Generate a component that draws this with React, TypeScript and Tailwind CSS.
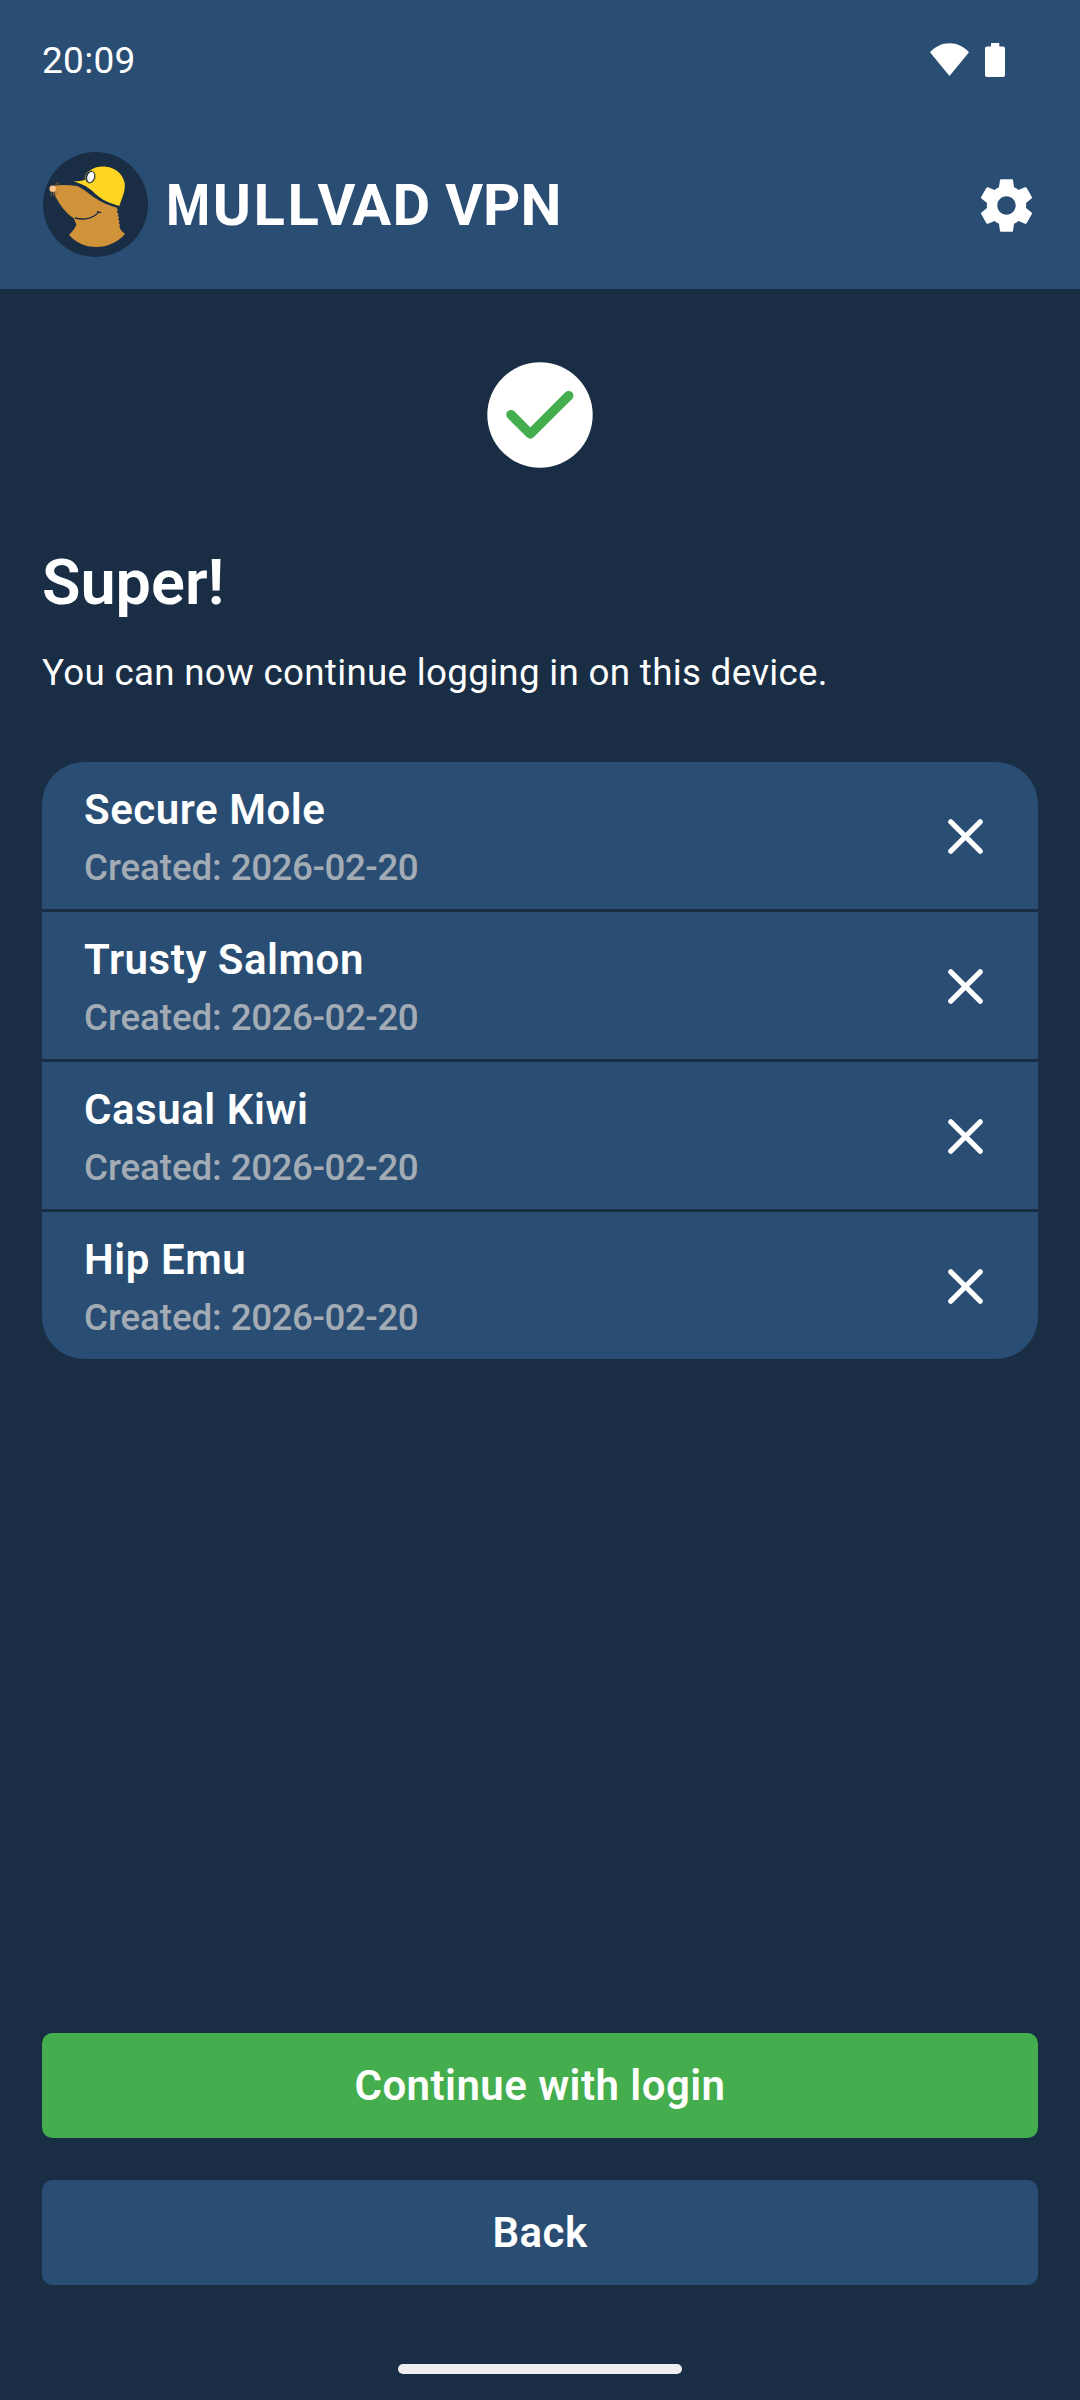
import type { ReactNode } from "react";

interface Device {
  id: string;
  name: string;
  created: string;
}

const devices: Device[] = [
  { id: "1", name: "Secure Mole", created: "2026-02-20" },
  { id: "2", name: "Trusty Salmon", created: "2026-02-20" },
  { id: "3", name: "Casual Kiwi", created: "2026-02-20" },
  { id: "4", name: "Hip Emu", created: "2026-02-20" },
];

function MoleLogo() {
  return (
    <svg viewBox="0 0 315 315" className="w-[105px] h-[105px]">
      <circle cx="157.5" cy="157.5" r="157.5" fill="#192E45" />
      {/* Head and neck */}
      <path
        fill="#D0933A"
        d="M33 101C53 98 78 99 102 102C116 108 129 118 143 129C165 145 190 159 222 167L224 177L221 180L227 186L224 191L229 197L225 202L230 208L227 213L231 219L229 225L235 236L246 246C224 271 194 285 160 285C126 285 98 271 78 248C88 239 96 229 100 218L98 212L95 207L94 200C83 194 72 184 62 172C51 158 42 144 35 126Z"
      />
      {/* Smile */}
      <path
        fill="none"
        stroke="#192E45"
        strokeWidth="4"
        strokeLinecap="round"
        d="M97 198C123 205 151 199 166 181M163 179L173 182"
      />
      {/* Cap */}
      <path
        fill="#FFD524"
        d="M92 88C106 88 117 87 126 83C131 72 134 61 143 54C156 45 172 42 189 44C218 47 240 66 245 94C248 119 236 140 229 162C203 155 183 147 166 133C152 121 136 103 112 95Z"
      />
      <ellipse cx="142" cy="75" rx="15" ry="19" transform="rotate(17 142 75)" fill="#192E45" stroke="#B79D2E" strokeWidth="2" />
      <ellipse cx="143" cy="75" rx="10" ry="15.5" transform="rotate(17 143 75)" fill="#fff" />
      {/* Whiskers and nose */}
      <path
        fill="none"
        stroke="#9A7440"
        strokeWidth="2"
        d="M38 102L41 90M42 104L49 91M35 118L39 139M31 117L32 133M28 117L23 132M36 116L43 126"
      />
      <circle cx="29" cy="110" r="9.5" fill="#FDC58A" />
    </svg>
  );
}

// Letters are spaced by hand to keep the wordmark tight around the diagonals
function Wordmark() {
  return (
    <h1 className="ml-[18px] pt-px text-[58px] leading-[72px] font-bold [font-kerning:none] whitespace-pre">
      <span className="inline-block w-[46.8px] origin-left scale-x-[0.87]">M</span>
      <span className="tracking-[2.4px]">U</span>
      <span className="tracking-[2.6px]">L</span>
      <span className="tracking-[-1.3px]">L</span>
      <span className="tracking-[-3.1px]">V</span>
      <span className="tracking-[1.1px]">A</span>
      <span className="tracking-[0.4px]">D </span>
      <span className="tracking-[-0.3px]">V</span>
      <span className="tracking-[0.3px]">P</span>
      <span>N</span>
    </h1>
  );
}

function SettingsIcon() {
  return (
    <svg viewBox="0 0 24 24" fill="currentColor" className="w-[63px] h-[63px]">
      <path d="M19.43 12.98c.04-.32.07-.64.07-.98s-.03-.66-.07-.98l2.11-1.65c.19-.15.24-.42.12-.64l-2-3.46c-.12-.22-.39-.3-.61-.22l-2.49 1c-.52-.4-1.08-.73-1.69-.98l-.38-2.65C14.46 2.18 14.25 2 14 2h-4c-.25 0-.46.18-.49.42l-.38 2.65c-.61.25-1.17.59-1.69.98l-2.49-1c-.23-.09-.49 0-.61.22l-2 3.46c-.13.22-.07.49.12.64l2.11 1.65c-.04.32-.07.65-.07.98s.03.66.07.98l-2.11 1.65c-.19.15-.24.42-.12.64l2 3.46c.12.22.39.3.61.22l2.49-1c.52.4 1.08.73 1.69.98l.38 2.65c.03.24.24.42.49.42h4c.25 0 .46-.18.49-.42l.38-2.65c.61-.25 1.17-.59 1.69-.98l2.49 1c.23.09.49 0 .61-.22l2-3.46c.12-.22.07-.49-.12-.64l-2.11-1.65zM12 15.5c-1.93 0-3.5-1.57-3.5-3.5s1.57-3.5 3.5-3.5 3.5 1.57 3.5 3.5-1.57 3.5-3.5 3.5z" />
    </svg>
  );
}

function StatusBar() {
  return (
    <div className="h-[120px] pl-[42px] pr-[75px] flex items-center justify-between">
      <span className="text-[37px] leading-[43px] tracking-[0.3px]">20:09</span>
      <div className="flex items-center gap-4">
        <svg viewBox="0 0 39 34" fill="currentColor" className="w-[39px] h-[34px]">
          <path d="M0 9.3C5 3.5 12 .2 19.5 .2S34 3.5 39 9.3L19.5 33Z" />
        </svg>
        <svg viewBox="0 0 20 34" fill="currentColor" className="w-5 h-[34px]">
          <path d="M6 0H14.3V3.5H18Q20 3.5 20 5.5V32Q20 34 18 34H2Q0 34 0 32V5.5Q0 3.5 2 3.5H6Z" />
        </svg>
      </div>
    </div>
  );
}

function DeviceRow({ device }: { device: Device }) {
  return (
    <div className="h-[147px] pl-[42px] pr-[55px] pt-[2px] flex items-center justify-between bg-[#294D73]">
      <div className="flex flex-col">
        <span className="text-[42px] leading-[62px] font-semibold tracking-[0.55px]">{device.name}</span>
        <span className="pt-px text-[36.75px] leading-[52.5px] font-medium tracking-[-0.45px] text-[#A3ABB5]">
          <span className="tracking-[-0.1px]">Created: </span>
          {device.created}
        </span>
      </div>
      <button>
        <svg viewBox="0 0 35 35" className="w-[35px] h-[35px]">
          <path
            d="M2.8 2.8L32.2 32.2M32.2 2.8L2.8 32.2"
            stroke="currentColor"
            strokeWidth="5.2"
            strokeLinecap="round"
          />
        </svg>
      </button>
    </div>
  );
}

function ActionButton({ className, children }: { className: string; children: ReactNode }) {
  return (
    <button
      className={`w-full h-[105px] rounded-[10.5px] flex items-center justify-center text-[42px] leading-[63px] font-semibold tracking-[0.45px] ${className}`}
    >
      {children}
    </button>
  );
}

export default function App() {
  return (
    <div className="w-[1080px] h-[2400px] flex flex-col bg-[#192E45] text-white font-['Roboto',sans-serif]">
      {/* Top bar */}
      <header className="h-[289px] bg-[#294D73]">
        <StatusBar />
        <div className="h-[169px] pl-[43px] pr-[42px] flex items-center justify-between">
          <div className="flex items-center">
            <MoleLogo />
            <Wordmark />
          </div>
          <button className="pt-px">
            <SettingsIcon />
          </button>
        </div>
      </header>

      <main className="flex-1 px-[42px] pt-[73px] flex flex-col">
        <svg viewBox="0 0 106 106" className="w-[106px] h-[106px] self-center">
          <circle cx="53" cy="53" r="52.7" fill="#fff" />
          <path
            d="M24 52.7L43.3 72L81.7 33.7"
            fill="none"
            stroke="#44AD4D"
            strokeWidth="9.5"
            strokeLinecap="round"
            strokeLinejoin="round"
          />
        </svg>

        <h2 className="mt-[73px] text-[63px] leading-[84px] font-semibold">Super!</h2>
        <p className="mt-[21px] text-[36.75px] leading-[53px] tracking-[0.3px]">
          You can now continue logging in on this device.
        </p>

        {/* Device list */}
        <div className="mt-[63px] flex flex-col gap-[3px] rounded-[42px] overflow-hidden">
          {devices.map((device) => (
            <DeviceRow key={device.id} device={device} />
          ))}
        </div>

        {/* Actions */}
        <div className="mt-auto flex flex-col gap-[42px]">
          <ActionButton className="bg-[#44AD4D]">Continue with login</ActionButton>
          <ActionButton className="bg-[#294D73]">Back</ActionButton>
        </div>
      </main>

      {/* Gesture handle */}
      <div className="h-[115px] pt-[79px] flex justify-center">
        <div className="w-[284px] h-[10px] rounded-full bg-[#EEEEF0]" />
      </div>
    </div>
  );
}
